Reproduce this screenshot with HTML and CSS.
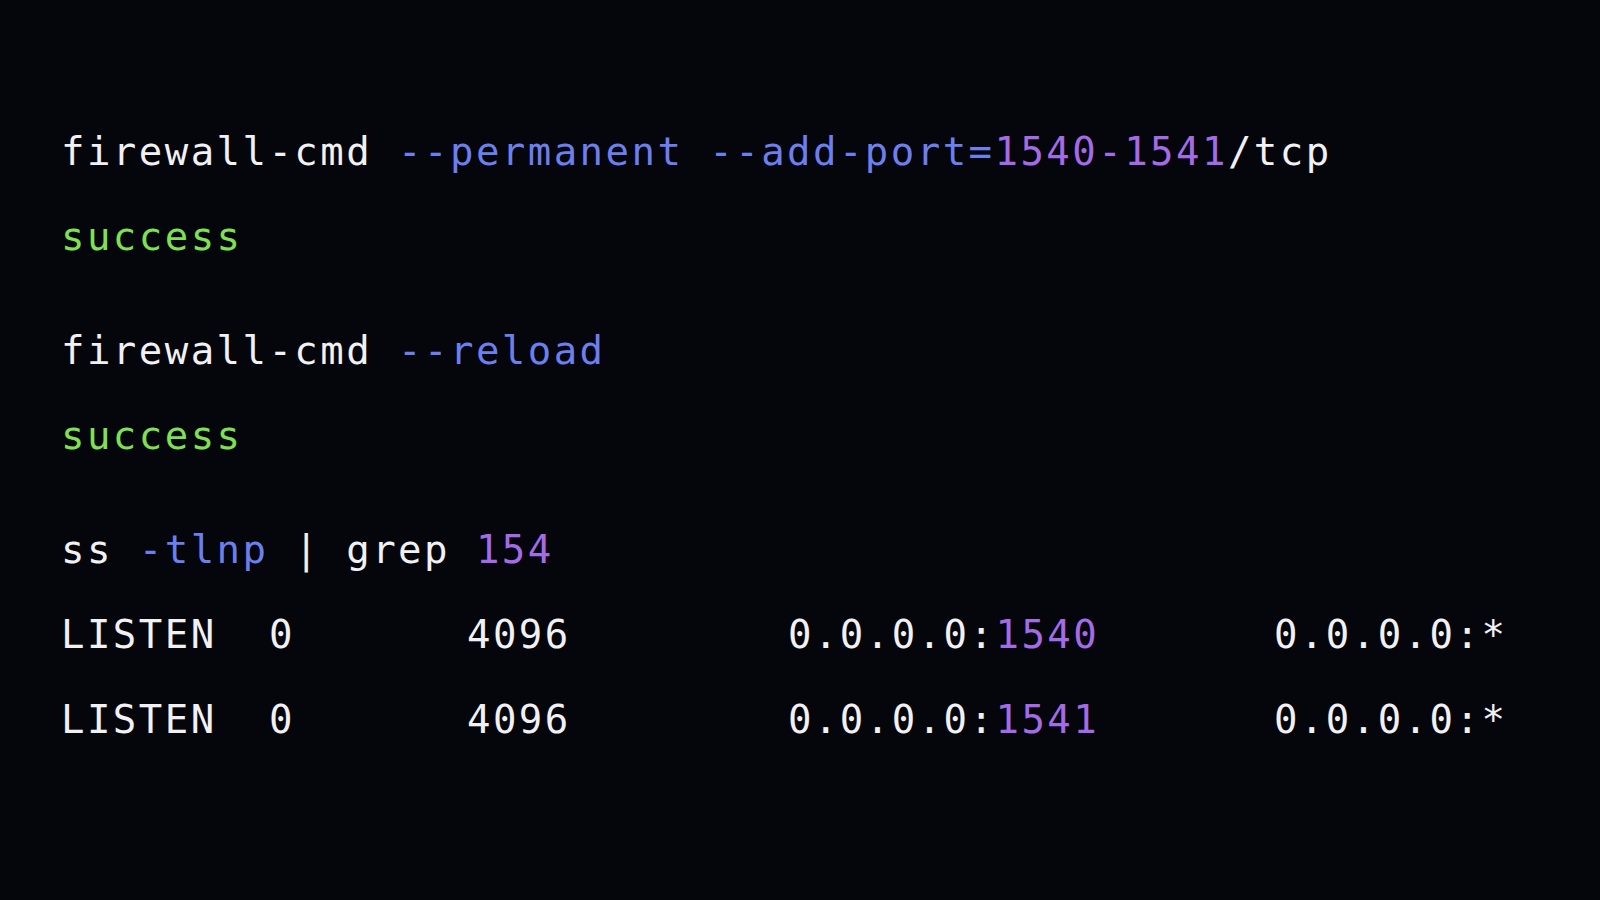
FILE: index.html
```html
<!DOCTYPE html>
<html lang="en">
<head>
<meta charset="utf-8">
<title>firewall-cmd</title>
<link rel="stylesheet" href="styles.css">
</head>
<body>
<main class="term">
  <section class="block">
    <div class="line">firewall-cmd <span class="opt">--permanent</span> <span class="opt">--add-port=</span><span class="num">1540-1541</span>/tcp</div>
    <div class="line ok">success</div>
  </section>
  <section class="block">
    <div class="line">firewall-cmd <span class="opt">--reload</span></div>
    <div class="line ok">success</div>
  </section>
  <section class="block">
    <div class="line">ss <span class="opt">-tlnp</span> | grep <span class="num">154</span></div>
    <div class="line row"><span>LISTEN</span><span>0</span><span>4096</span><span>0.0.0.0:<span class="num">1540</span></span><span>0.0.0.0:*</span></div>
    <div class="line row"><span>LISTEN</span><span>0</span><span>4096</span><span>0.0.0.0:<span class="num">1541</span></span><span>0.0.0.0:*</span></div>
  </section>
</main>
</body>
</html>
```
FILE: styles.css
```css
html, body {
  margin: 0;
  padding: 0;
  background: #05050c;
  height: 100%;
}

body {
  width: 1600px;
  height: 900px;
  overflow: hidden;
}

.term {
  padding: 109px 0 0 61px;
  display: flex;
  flex-direction: column;
  gap: 29px;
  font-family: "DejaVu Sans Mono", "Liberation Mono", monospace;
  font-size: 39px;
  letter-spacing: 2.45px;
  color: #f1f1f3;
}

.block {
  display: flex;
  flex-direction: column;
}

.line {
  line-height: 85px;
  height: 85px;
  white-space: pre;
}

.row {
  display: grid;
  grid-template-columns: 208px 198px 321px 486px auto;
  justify-content: start;
}

.opt {
  color: #6b80ee;
}

.num {
  color: #a46be6;
}

.ok {
  color: #7fe052;
}
```
